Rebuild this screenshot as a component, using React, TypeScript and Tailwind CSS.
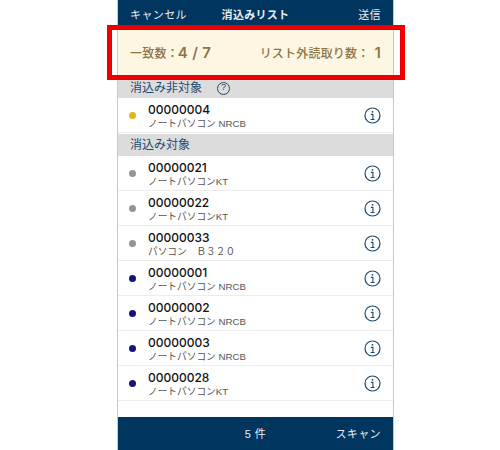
const font = "[font-family:'Liberation_Sans','Noto_Sans_CJK_JP',sans-serif]";
const latin = "[font-family:'Inter','Noto_Sans_CJK_JP',sans-serif]";

const rows = [
    { id: '00000021', name: 'ノートパソコンKT', color: 'bg-[#949494]' },
    { id: '00000022', name: 'ノートパソコンKT', color: 'bg-[#949494]' },
    { id: '00000033', name: 'パソコン　Ｂ３２０', color: 'bg-[#949494]' },
    { id: '00000001', name: 'ノートパソコン NRCB', color: 'bg-[#14147f]' },
    { id: '00000002', name: 'ノートパソコン NRCB', color: 'bg-[#14147f]' },
    { id: '00000003', name: 'ノートパソコン NRCB', color: 'bg-[#14147f]' },
    { id: '00000028', name: 'ノートパソコンKT', color: 'bg-[#14147f]' },
];

function InfoIcon() {
    return (
        <svg width="17" height="17" viewBox="0 0 17 17" fill="none" stroke="#1c4a72">
            <circle cx="8.5" cy="8.5" r="7.5" strokeWidth="1.2" />
            <circle cx="8.5" cy="4.8" r="0.9" fill="#1c4a72" stroke="none" />
            <path d="M6.9 7.4h2v5M6.6 12.5h3.9" strokeWidth="1.1" />
        </svg>
    );
}

function Row({ id, name, color }: { id: string; name: string; color: string }) {
    return (
        <div className="flex h-[35px] shrink-0 items-center border-b border-[#ececec] pl-[11px] pr-[12px]">
            <div className={`h-[7px] w-[7px] rounded-full ${color}`}></div>
            <div className="ml-[12px] flex-1 pt-[3px]">
                <div className={`text-[12px] leading-[14px] font-medium text-[#111] ${latin}`}>{id}</div>
                <div className="text-[9.7px] leading-[13px] text-[#555]">{name}</div>
            </div>
            <InfoIcon />
        </div>
    );
}

export default function App() {
    return (
        <div className={`relative flex h-[450px] w-[500px] justify-center bg-white pl-[11px] ${font}`}>
            <div className="flex h-full w-[277px] flex-col border-x border-[#c8c8c8]">
                <header className="grid h-[27px] shrink-0 grid-cols-[1fr_auto_1fr] items-center bg-[#00355f] px-[12px] pt-[3px] text-[11px] text-[#e8edf2]">
                    <span className="tracking-[0.4px]">キャンセル</span>
                    <span className="font-bold tracking-[0.3px]">消込みリスト</span>
                    <span className="text-right tracking-[0.4px]">送信</span>
                </header>

                <div className="flex h-[52px] shrink-0 items-center justify-between bg-[#fdf6e3] px-[12px] text-[12px] font-medium tracking-[0.2px] text-[#8f7445]">
                    <span className="flex items-baseline">
                        一致数：<span className={`ml-[-1px] text-[15px] font-semibold tracking-[0.3px] ${latin}`}>4 / 7</span>
                    </span>
                    <span className="flex items-baseline">
                        リスト外読取り数：<span className={`ml-[5px] text-[15px] font-semibold ${latin}`}>1</span>
                    </span>
                </div>

                <div className="flex h-[19px] shrink-0 items-center gap-[15px] bg-[#dcdcdc] px-[12px] pb-px text-[12px] text-[#1c4a72]">
                    <span>消込み非対象</span>
                    <span className="flex h-[13px] w-[13px] items-center justify-center rounded-full border border-[#1c4a72] text-[9px]">?</span>
                </div>
                <Row id="00000004" name="ノートパソコン NRCB" color="bg-[#e2b714]" />

                <div className="mt-px flex h-[22px] shrink-0 items-center bg-[#dcdcdc] px-[12px] text-[12px] text-[#1c4a72]">
                    消込み対象
                </div>
                {rows.map((row) => (
                    <Row key={row.id} {...row} />
                ))}

                <div className="flex-1"></div>
                <footer className="grid h-[33px] shrink-0 grid-cols-3 items-center bg-[#00355f] px-[12px] pt-px text-[11px] text-[#e8edf2]">
                    <span></span>
                    <span className="text-center tracking-[0.4px]">5 件</span>
                    <span className="text-right tracking-[0.4px]">スキャン</span>
                </footer>
            </div>

            {/* red highlight frame over the summary band */}
            <div className="absolute left-[107px] top-[25px] h-[55px] w-[298px] border-[5px] border-[#ee0000]"></div>
        </div>
    );
}
